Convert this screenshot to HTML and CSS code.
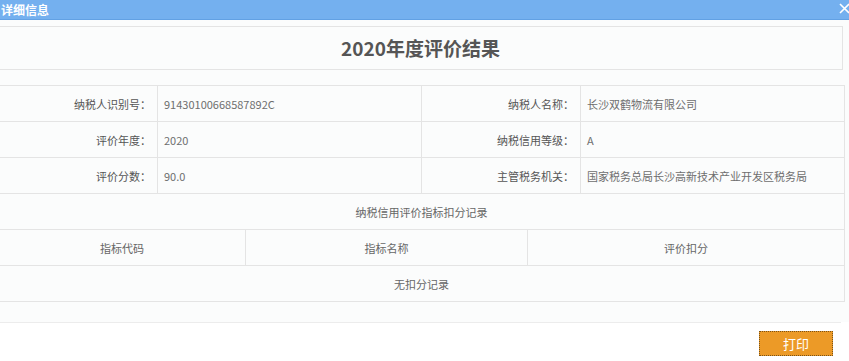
FILE: index.html
```html
<!DOCTYPE html>
<html lang="zh-CN">

<head>
    <meta charset="UTF-8">
    <meta name="viewport" content="width=device-width, initial-scale=1.0">
    <title>详细信息</title>
    <link rel="stylesheet" href="styles.css">
</head>

<body>
    <div class="dialog">
        <div class="dialog-title">
            <span>详细信息</span>
            <svg class="close" width="11" height="11" viewBox="0 0 11 11">
                <path d="M1 1 L10 10 M10 1 L1 10" stroke="#fff" stroke-width="1.6" fill="none" />
            </svg>
        </div>

        <div class="dialog-body">
            <div class="result-title">2020年度评价结果</div>

            <table class="info-table">
                <colgroup>
                    <col class="col-label">
                    <col class="col-value">
                    <col class="col-label">
                    <col class="col-value">
                </colgroup>
                <tr>
                    <td class="label">纳税人识别号：</td>
                    <td class="value">91430100668587892C</td>
                    <td class="label">纳税人名称：</td>
                    <td class="value">长沙双鹤物流有限公司</td>
                </tr>
                <tr>
                    <td class="label">评价年度：</td>
                    <td class="value">2020</td>
                    <td class="label">纳税信用等级：</td>
                    <td class="value">A</td>
                </tr>
                <tr>
                    <td class="label">评价分数：</td>
                    <td class="value">90.0</td>
                    <td class="label">主管税务机关：</td>
                    <td class="value">国家税务总局长沙高新技术产业开发区税务局</td>
                </tr>
            </table>

            <table class="record-table">
                <colgroup>
                    <col class="col-code">
                    <col class="col-name">
                    <col class="col-score">
                </colgroup>
                <tr>
                    <td colspan="3">纳税信用评价指标扣分记录</td>
                </tr>
                <tr>
                    <td>指标代码</td>
                    <td>指标名称</td>
                    <td>评价扣分</td>
                </tr>
                <tr>
                    <td colspan="3">无扣分记录</td>
                </tr>
            </table>
        </div>

        <div class="dialog-footer">
            <button class="print-btn" onclick="window.print()">打印</button>
        </div>
    </div>
</body>

</html>
```

FILE: styles.css
```css
body {
    margin: 0;
    background-color: #fff;
    font-family: "Noto Sans CJK SC", "Noto Sans", sans-serif;
    overflow: hidden;
}

.dialog {
    margin-left: -10px;
    width: 864px;
}

.dialog-title {
    height: 19px;
    line-height: 17px;
    padding-left: 11px;
    background-color: #74b0ef;
    border-bottom: 1px solid #62a1e4;
    color: #fff;
    font-size: 12px;
    font-weight: bold;
    display: flex;
    align-items: center;
    justify-content: space-between;
}

.close {
    margin-right: 4px;
    margin-top: -3px;
}

.dialog-body {
    padding: 6px 10px 20px 8px;
    background-color: #fbfcfc;
}

.result-title {
    height: 42px;
    line-height: 42px;
    border: 1px solid #e4e4e4;
    margin-right: 1px;
    text-align: center;
    font-size: 19px;
    font-weight: bold;
    color: #555;
    margin-bottom: 15px;
}

table {
    width: 846px;
    border-collapse: collapse;
    table-layout: fixed;
    font-size: 11px;
}

td {
    height: 35px;
    padding: 0;
    border: 1px solid #e4e4e4;
    color: #6e6e6e;
}

.col-label {
    width: 159px;
}

.col-value {
    width: 264px;
}

.label {
    text-align: right;
    padding-right: 6px;
    color: #555;
}

.value {
    padding-left: 6px;
}

.record-table {
    margin-top: -1px;
}

.record-table td {
    text-align: center;
    color: #666;
}

.col-code {
    width: 247px;
}

.col-name {
    width: 282px;
}

.col-score {
    width: 317px;
}

.dialog-footer {
    margin-right: 13px;
    padding: 8px 8px 0 0;
    border-top: 1px solid #ececec;
    display: flex;
    justify-content: flex-end;
}

.print-btn {
    width: 74px;
    height: 25px;
    background-color: #ec9a27;
    border: 1px dotted #7a5218;
    color: #fff;
    font-family: "Noto Sans CJK SC", sans-serif;
    font-size: 13px;
    cursor: pointer;
}
```
